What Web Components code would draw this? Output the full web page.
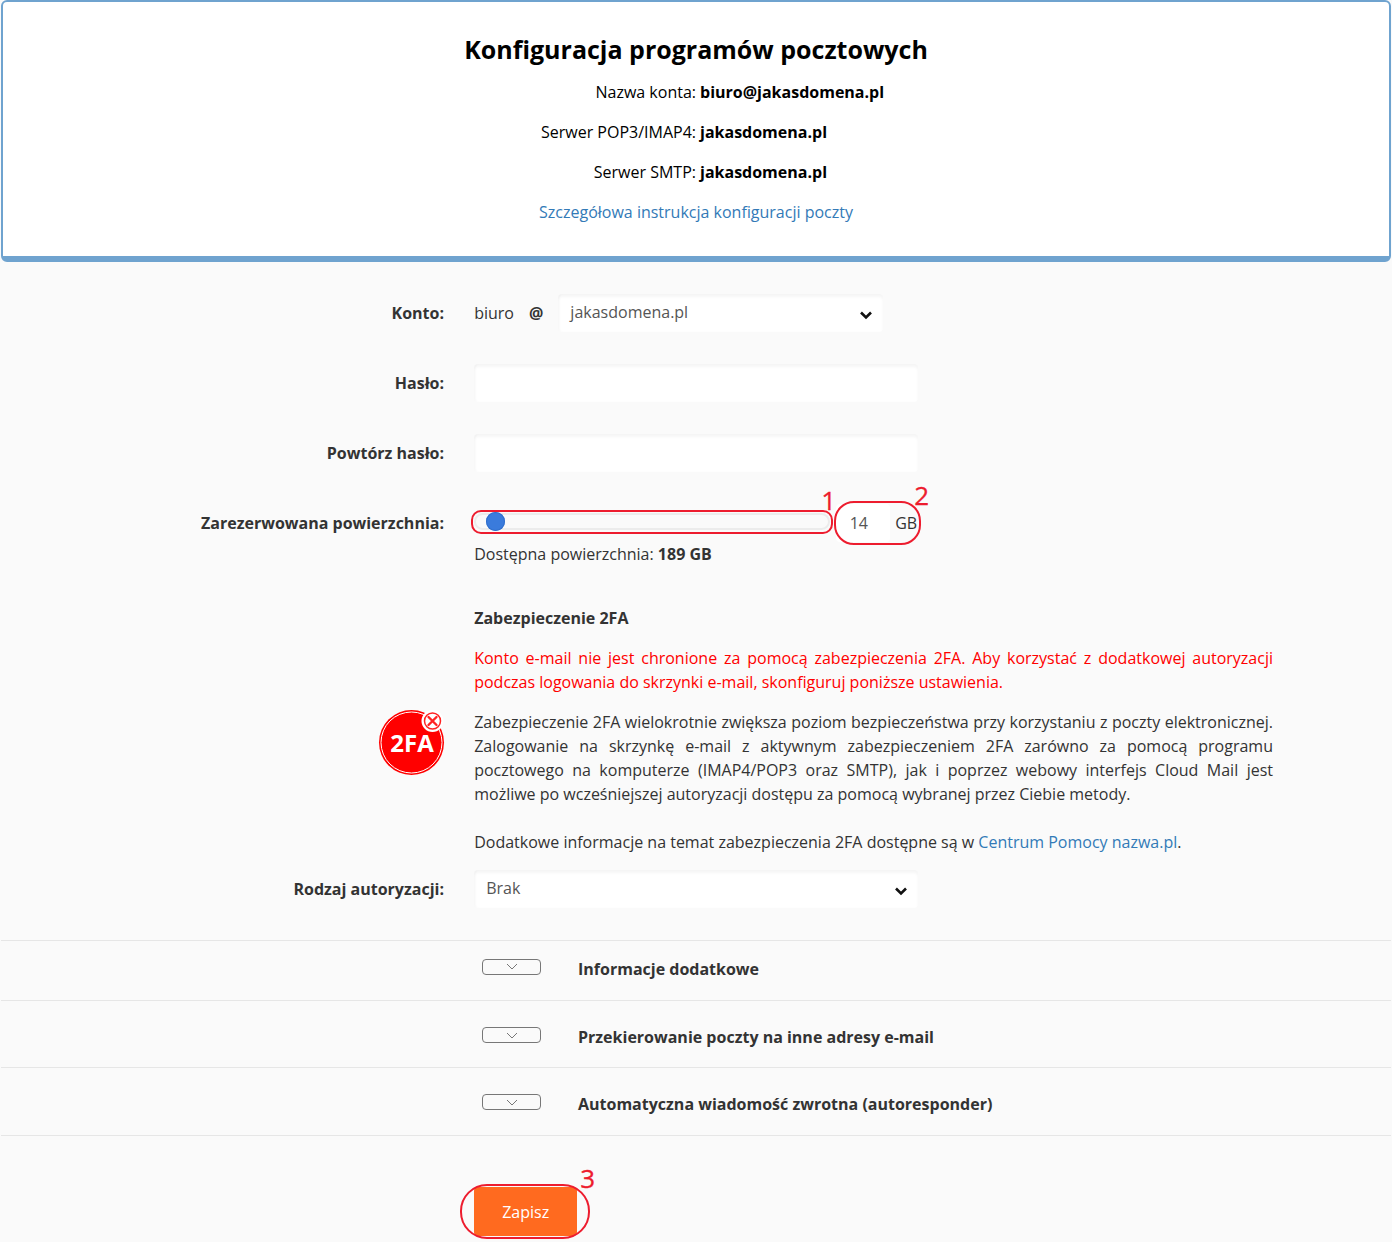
<!DOCTYPE html>
<html lang="pl">
<head>
<meta charset="utf-8">
<title>Konfiguracja</title>
<style>
  html, body { margin: 0; padding: 0; background: #fafafa; }
  body { font: 16px/24px "Open Sans", "Liberation Sans", sans-serif; color: #333; }
  main { display: block; padding: 0 1px 6px; }
  a { color: #337ab7; text-decoration: none; }
  b { font-weight: 700; }
</style>
</head>
<body>
<main>
  <config-box>
    <config-line label="Nazwa konta:" value="biuro@jakasdomena.pl"></config-line>
    <config-line label="Serwer POP3/IMAP4:" value="jakasdomena.pl"></config-line>
    <config-line label="Serwer SMTP:" value="jakasdomena.pl"></config-line>
  </config-box>

  <form-field label="Konto:" style="margin-top:32px">
    <account-name></account-name>
  </form-field>
  <form-field label="Hasło:" style="margin-top:32px"><text-box></text-box></form-field>
  <form-field label="Powtórz hasło:" style="margin-top:32px"><text-box></text-box></form-field>
  <form-field label="Zarezerwowana powierzchnia:" style="margin-top:32px"><space-slider></space-slider></form-field>
  <form-field>
    <div>Dostępna powierzchnia: <b>189 GB</b></div>
  </form-field>

  <form-field style="margin-top:40px">
    <b>Zabezpieczenie 2FA</b>
  </form-field>
  <form-field style="margin-top:16px">
    <div style="color:#f00;text-align:justify">Konto e-mail nie jest chronione za pomocą zabezpieczenia 2FA. Aby korzystać z dodatkowej autoryzacji podczas logowania do skrzynki e-mail, skonfiguruj poniższe ustawienia.</div>
  </form-field>
  <form-field style="margin-top:16px">
    <tfa-badge slot="label"></tfa-badge>
    <div style="text-align:justify">Zabezpieczenie 2FA wielokrotnie zwiększa poziom bezpieczeństwa przy korzystaniu z poczty elektronicznej. Zalogowanie na skrzynkę e-mail z aktywnym zabezpieczeniem 2FA zarówno za pomocą programu pocztowego na komputerze (IMAP4/POP3 oraz SMTP), jak i poprzez webowy interfejs Cloud Mail jest możliwe po wcześniejszej autoryzacji dostępu za pomocą wybranej przez Ciebie metody.<br><br>Dodatkowe informacje na temat zabezpieczenia 2FA dostępne są w <a href="#">Centrum Pomocy nazwa.pl</a>.</div>
  </form-field>
  <form-field label="Rodzaj autoryzacji:" style="margin-top:16px">
    <select-box value="Brak" style="width:444px"></select-box>
  </form-field>

  <fold-row style="margin-top:32px;height:60px;padding-bottom:4px" title="Informacje dodatkowe"></fold-row>
  <fold-row style="height:67px;padding-top:6px" title="Przekierowanie poczty na inne adresy e-mail"></fold-row>
  <fold-row style="height:69px;padding-top:5px" title="Automatyczna wiadomość zwrotna (autoresponder)"></fold-row>

  <form-field style="margin-top:51px"><save-button>Zapisz</save-button></form-field>
</main>

<script>
class ConfigBox extends HTMLElement {
  connectedCallback() {
    this.attachShadow({ mode: 'open' }).innerHTML = `
      <style>
        :host {
          display: block; box-sizing: border-box; height: 262px; background: #fff; color: #000;
          border: 2px solid #6fa3cf; border-bottom-width: 6px; border-radius: 6px; padding-top: 29px;
        }
        h1 { margin: 0 0 13px; font-size: 25px; line-height: 36px; font-weight: 700; text-align: center; }
        .body { display: grid; row-gap: 16px; }
        a { color: #337ab7; text-decoration: none; text-align: center; }
      </style>
      <h1>Konfiguracja programów pocztowych</h1>
      <div class="body">
        <slot></slot>
        <a href="#">Szczegółowa instrukcja konfiguracji poczty</a>
      </div>`;
  }
}

class ConfigLine extends HTMLElement {
  connectedCallback() {
    this.attachShadow({ mode: 'open' }).innerHTML = `
      <style>
        :host { display: grid; grid-template-columns: 1fr 1fr; column-gap: 4px; height: 24px; margin-left: 4px; }
        .l { text-align: right; }
        .v { font-weight: 700; }
      </style>
      <span class="l">${this.getAttribute('label')}</span><span class="v">${this.getAttribute('value')}</span>`;
  }
}

class FormField extends HTMLElement {
  connectedCallback() {
    const label = this.getAttribute('label') || '';
    this.attachShadow({ mode: 'open' }).innerHTML = `
      <style>
        :host { display: flex; align-items: flex-start; }
        .label {
          flex: none; width: 443px; margin-right: 30.2px; display: flex; justify-content: flex-end;
          font-weight: 700; line-height: 38px;
        }
        .value { flex: none; width: 798.8px; }
      </style>
      <div class="label"><slot name="label">${label}</slot></div>
      <div class="value"><slot></slot></div>`;
  }
}

class TextBox extends HTMLElement {
  connectedCallback() {
    this.attachShadow({ mode: 'open' }).innerHTML = `
      <style>
        :host { display: block; width: 444px; height: 38px; }
        input {
          display: block; box-sizing: border-box; width: 100%; height: 100%; border: 0; outline: 0;
          padding: 0 12px; border-radius: 4px; background: #fff; font: inherit;
          box-shadow: inset 0 3px 3px rgba(0,0,0,.04), inset 2px 0 2px rgba(0,0,0,.02);
        }
      </style>
      <input type="password">`;
  }
}

class SelectBox extends HTMLElement {
  connectedCallback() {
    this.attachShadow({ mode: 'open' }).innerHTML = `
      <style>
        :host {
          display: flex; align-items: center; justify-content: space-between; box-sizing: border-box;
          height: 38px; padding: 0 10px 0 12px; background: #fff; border-radius: 4px; color: #555;
          box-shadow: inset 0 3px 3px rgba(0,0,0,.04), inset 2px 0 2px rgba(0,0,0,.02);
        }
        span { margin-top: -3px; }
        svg { display: block; margin-top: 3px; }
      </style>
      <span>${this.getAttribute('value')}</span>
      <svg width="14" height="10" viewBox="0 0 14 10"><path d="M2 2.5 7 7.5 12 2.5" fill="none" stroke="#111" stroke-width="2.6"/></svg>`;
  }
}

class AccountName extends HTMLElement {
  connectedCallback() {
    this.attachShadow({ mode: 'open' }).innerHTML = `
      <style>
        :host { display: flex; align-items: center; height: 38px; }
        .at { font-weight: 700; margin: 0 15px 0 15px; font-size: 16px; }
        select-box { width: 325px; }
      </style>
      <span>biuro</span><span class="at">@</span>
      <select-box value="jakasdomena.pl"></select-box>`;
  }
}

class SpaceSlider extends HTMLElement {
  connectedCallback() {
    this.attachShadow({ mode: 'open' }).innerHTML = `
      <style>
        :host { display: flex; align-items: center; position: relative; height: 38px; width: 460px; }
        .track {
          flex: none; box-sizing: border-box; width: 356px; height: 17px; margin-top: -3px; position: relative;
          border: 2px solid #ececec; border-radius: 9px; background: #fafafa;
        }
        .thumb {
          position: absolute; left: 10px; top: -3px; width: 19px; height: 19px; border-radius: 50%;
          background: #3a7bdc; box-shadow: inset 0 0 0 1px #3270cc;
        }
        .num {
          flex: none; box-sizing: border-box; margin-left: 6px; width: 54px; height: 38px; padding-left: 13.5px;
          line-height: 38px; background: #fff; border-radius: 4px; color: #555;
        }
        .unit { margin-left: 5px; }
        .ring { position: absolute; box-sizing: border-box; border: 2px solid #ed1c2e; }
        .r1 { left: -3px; top: 6px; width: 362px; height: 24px; border-radius: 10px; }
        .r2 { left: 360px; top: -3px; width: 87px; height: 44px; border-radius: 20px; }
        .tag { position: absolute; font-size: 26px; line-height: 26px; color: #ed1c2e; -webkit-text-stroke: .3px #ed1c2e; }
        .t1 { left: 347px; top: -17px; }
        .t2 { left: 440px; top: -22px; }
      </style>
      <div class="track"><div class="thumb"></div></div>
      <div class="num">14</div><div class="unit">GB</div>
      <div class="ring r1"></div><div class="ring r2"></div>
      <span class="tag t1">1</span><span class="tag t2">2</span>`;
  }
}

class TfaBadge extends HTMLElement {
  connectedCallback() {
    this.attachShadow({ mode: 'open' }).innerHTML = `
      <style>
        :host { display: block; width: 66px; height: 66px; }
        svg { display: block; }
        text { font: 700 24px "Open Sans", "Liberation Sans", sans-serif; fill: #fff; }
      </style>
      <svg width="66" height="66" viewBox="0 0 66 66" overflow="visible">
        <circle cx="33.5" cy="32.5" r="32.5" fill="#f00"/>
        <circle cx="33.5" cy="32.5" r="30.5" fill="none" stroke="#fff" stroke-width="1"/>
        <text x="34" y="42" text-anchor="middle">2FA</text>
        <circle cx="54.5" cy="11" r="11" fill="#fff"/>
        <circle cx="54.5" cy="11" r="8" fill="none" stroke="#f22" stroke-width="1.5"/>
        <path d="M50.5 7l8 8M58.5 7l-8 8" stroke="#f22" stroke-width="2.4" stroke-linecap="round"/>
      </svg>`;
  }
}

class FoldRow extends HTMLElement {
  connectedCallback() {
    this.attachShadow({ mode: 'open' }).innerHTML = `
      <style>
        :host {
          display: flex; align-items: center; box-sizing: border-box; padding-left: 481px;
          border-top: 1px solid #e6e6e6; font-weight: 700;
        }
        :host(:last-of-type) { border-bottom: 1px solid #e6e6e6; }
        .toggle {
          flex: none; box-sizing: border-box; width: 59px; height: 16px; margin-top: -4px; margin-right: 37px;
          border: 1px solid #777; border-radius: 4px; display: flex; align-items: center; justify-content: center;
        }
      </style>
      <div class="toggle"><svg width="12" height="7" viewBox="0 0 12 7"><path d="M1 1l5 5 5-5" fill="none" stroke="#777" stroke-width="1"/></svg></div>
      <span>${this.getAttribute('title')}</span>`;
  }
}

class SaveButton extends HTMLElement {
  connectedCallback() {
    this.attachShadow({ mode: 'open' }).innerHTML = `
      <style>
        :host { display: block; position: relative; width: 103px; height: 49px; }
        button {
          display: block; width: 100%; height: 100%; border: 0; border-radius: 4px; padding: 0;
          background: #ff6a1f; color: #fff; font: inherit;
        }
        .ring {
          position: absolute; left: -14px; top: -3px; width: 130px; height: 55px; box-sizing: border-box;
          border: 2px solid #ed1c2e; border-radius: 27px;
        }
        .tag { position: absolute; left: 106px; top: -22px; font-size: 26px; line-height: 26px; color: #ed1c2e; -webkit-text-stroke: .3px #ed1c2e; }
      </style>
      <button type="button"><slot></slot></button>
      <div class="ring"></div><span class="tag">3</span>`;
  }
}

customElements.define('config-box', ConfigBox);
customElements.define('config-line', ConfigLine);
customElements.define('form-field', FormField);
customElements.define('text-box', TextBox);
customElements.define('select-box', SelectBox);
customElements.define('account-name', AccountName);
customElements.define('space-slider', SpaceSlider);
customElements.define('tfa-badge', TfaBadge);
customElements.define('fold-row', FoldRow);
customElements.define('save-button', SaveButton);
</script>
</body>
</html>
